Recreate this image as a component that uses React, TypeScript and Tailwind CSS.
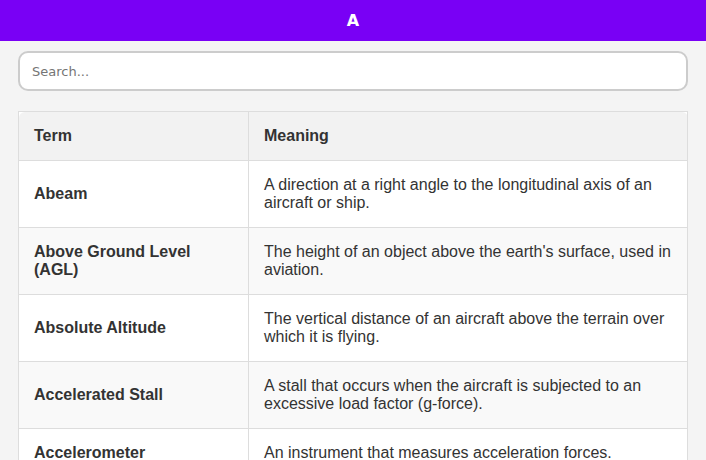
import React, { useState } from 'react';

const terms = [
  { term: 'Abeam', meaning: 'A direction at a right angle to the longitudinal axis of an aircraft or ship.' },
  { term: 'Above Ground Level (AGL)', meaning: "The height of an object above the earth's surface, used in aviation." },
  { term: 'Absolute Altitude', meaning: 'The vertical distance of an aircraft above the terrain over which it is flying.' },
  { term: 'Accelerated Stall', meaning: 'A stall that occurs when the aircraft is subjected to an excessive load factor (g-force).' },
  { term: 'Accelerometer', meaning: 'An instrument that measures acceleration forces.' },
  { term: 'Adverse Yaw', meaning: 'The tendency of an aircraft to yaw opposite to the direction of a roll.' },
  { term: 'Aileron', meaning: 'A hinged control surface on the trailing edge of a wing, used to control roll.' },
];

export default function App() {
  const [query, setQuery] = useState('');

  const filtered = terms.filter(t =>
    t.term.toLowerCase().includes(query.toLowerCase())
  );

  return (
    <div className="min-h-screen bg-[#f4f4f4]">
      <header className="h-[41px] bg-[#7900f5] flex items-center justify-center">
        <h1 className="text-white font-bold text-[16px] font-['DejaVu_Sans',sans-serif]">A</h1>
      </header>

      <main className="px-[18px] pt-[10px] pb-6">
        <input
          type="text"
          value={query}
          onChange={e => setQuery(e.target.value)}
          placeholder="Search..."
          className="w-full h-[40px] px-3 bg-white border-2 border-[#cccccc] rounded-[10px] text-[13px] text-[#333] placeholder:text-[#757575] outline-none font-['DejaVu_Sans',sans-serif]"
        />

        <table className="mt-5 w-full border-collapse bg-white border border-[#dddddd] text-[16px] leading-[normal] text-[#333333] font-['Liberation_Sans',Arial,sans-serif]">
          <thead>
            <tr>
              <th className="w-[230px] p-[15px] text-left font-bold bg-[#f2f2f2] border border-[#dddddd] rounded-tl-[6px]">
                Term
              </th>
              <th className="p-[15px] text-left font-bold bg-[#f2f2f2] border border-[#dddddd] rounded-tr-[6px]">
                Meaning
              </th>
            </tr>
          </thead>
          <tbody>
            {filtered.map((t, i) => (
              <tr key={t.term} className={i % 2 === 1 ? 'bg-[#f9f9f9]' : 'bg-white'}>
                <td className="p-[15px] align-middle font-bold border border-[#dddddd]">{t.term}</td>
                <td className="p-[15px] align-middle border border-[#dddddd]">{t.meaning}</td>
              </tr>
            ))}
          </tbody>
        </table>
      </main>
    </div>
  );
}
